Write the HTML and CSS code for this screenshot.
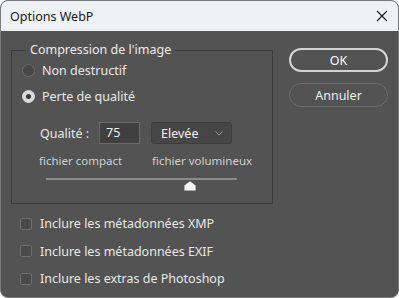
FILE: index.html
```html
<!DOCTYPE html>
<html lang="fr">
<head>
    <meta charset="UTF-8">
    <title>Options WebP</title>
    <link rel="stylesheet" href="styles.css">
</head>
<body>
<div class="window">
    <div class="titlebar">
        <span class="title">Options WebP</span>
        <svg class="close" width="12" height="12" viewBox="0 0 12 12">
            <path d="M1 1 L11 11 M11 1 L1 11" stroke="#1a1a1a" stroke-width="1.2" fill="none"/>
        </svg>
    </div>

    <div class="content">
        <div class="main">
            <!-- Compression -->
            <fieldset class="group">
                <legend>Compression de l'image</legend>
                <div class="radio-row first">
                    <span class="radio"></span>
                    <span>Non destructif</span>
                </div>
                <div class="radio-row">
                    <span class="radio checked"></span>
                    <span>Perte de qualité</span>
                </div>
                <div class="quality-row">
                    <span class="quality-label">Qualité :</span>
                    <div class="number-input">75</div>
                    <div class="select">
                        <span>Elevée</span>
                        <svg width="8" height="5" viewBox="0 0 8 5">
                            <path d="M0.5 0.5 L4 4 L7.5 0.5" stroke="#9a9a9a" stroke-width="1" fill="none"/>
                        </svg>
                    </div>
                </div>
                <div class="slider-labels">
                    <span class="label-left">fichier compact</span>
                    <span>fichier volumineux</span>
                </div>
                <div class="slider">
                    <div class="track"></div>
                    <svg class="thumb" width="12" height="10" viewBox="0 0 12 10">
                        <path d="M6 0.3 L11.6 4.6 L11.6 9.6 L0.4 9.6 L0.4 4.6 Z" fill="#f4f4f4"/>
                    </svg>
                </div>
            </fieldset>

            <!-- Metadaten -->
            <div class="checks">
                <div class="check-row"><span class="checkbox"></span>Inclure les métadonnées XMP</div>
                <div class="check-row"><span class="checkbox"></span>Inclure les métadonnées EXIF</div>
                <div class="check-row"><span class="checkbox"></span>Inclure les extras de Photoshop</div>
            </div>
        </div>

        <div class="buttons">
            <button class="button primary">OK</button>
            <button class="button">Annuler</button>
        </div>
    </div>
</div>
</body>
</html>
```

FILE: styles.css
```css
body {
    margin: 0;
    padding: 0;
    background-color: #ffffff;
    font-family: "Noto Sans", "Liberation Sans", sans-serif;
    font-size: 12px;
}

.window {
    width: 399px;
    height: 298px;
    box-sizing: border-box;
    border: 1px solid #7a7a7a;
    border-radius: 8px;
    overflow: hidden;
    display: flex;
    flex-direction: column;
    background-color: #535353;
}

.titlebar {
    height: 30px;
    flex: none;
    background-color: #eef2f7;
    display: flex;
    align-items: center;
    padding: 0 10px 0 9px;
}

.title {
    color: #1a1a1a;
    font-size: 12.5px;
    flex: 1;
}

.content {
    flex: 1;
    display: flex;
    padding: 10px 10px 0 10px;
    color: #e8e8e8;
}

.main {
    width: 262px;
}

/* Gruppe */
.group {
    margin: 0;
    padding: 0 0 0 10px;
    height: 163px;
    box-sizing: border-box;
    border: 1px solid #3b3b3b;
    border-radius: 1px;
}

.group legend {
    padding: 0 4px;
    margin-left: 4px;
    font-size: 12.5px;
    line-height: 18px;
    color: #ececec;
}

.radio-row {
    display: flex;
    align-items: center;
    gap: 7px;
    height: 26px;
    font-size: 12.5px;
}

.radio-row.first {
    margin-top: -1.5px;
}

.radio {
    width: 11px;
    height: 11px;
    border-radius: 50%;
    border: 1px solid #6a6a6a;
    background-color: #474747;
    display: inline-block;
}

.radio.checked {
    background-color: #dadada;
    border-color: #dadada;
    position: relative;
}

.radio.checked::after {
    content: "";
    position: absolute;
    left: 3px;
    top: 3px;
    width: 5px;
    height: 5px;
    border-radius: 50%;
    background-color: #3a3a3a;
}

.quality-row {
    display: flex;
    align-items: center;
    margin-top: 12px;
    margin-left: 18px;
    height: 23px;
}

.quality-label {
    width: 59px;
    font-size: 12.5px;
}

.number-input {
    width: 41px;
    height: 22px;
    box-sizing: border-box;
    border: 1px solid #6b6b6b;
    background-color: #404040;
    padding-left: 6px;
    line-height: 20px;
    font-size: 12.5px;
    color: #f0f0f0;
}

.select {
    margin-left: 11px;
    width: 81px;
    height: 22px;
    box-sizing: border-box;
    border: 1px solid #3d3d3d;
    border-radius: 3px;
    background-color: #464646;
    display: flex;
    align-items: center;
    justify-content: space-between;
    padding: 0 8px 0 9px;
    font-size: 12.5px;
    color: #f0f0f0;
}

.slider-labels {
    display: flex;
    margin-top: 7px;
    margin-left: 17px;
    height: 18px;
    line-height: 18px;
    color: #d0d0d0;
    font-size: 11.5px;
}

.label-left {
    width: 113px;
}

.slider {
    position: relative;
    margin: 8.5px 0 0 24px;
    width: 191px;
    height: 14px;
}

.track {
    height: 2px;
    background-color: #8b8b8b;
}

.thumb {
    position: absolute;
    left: 138px;
    top: 3px;
}

/* Checkboxen */
.checks {
    margin-top: 6px;
    padding-left: 9px;
}

.check-row {
    display: flex;
    align-items: center;
    gap: 8px;
    height: 27.5px;
    font-size: 12.5px;
    color: #e8e8e8;
}

.checkbox {
    width: 12px;
    height: 12px;
    box-sizing: border-box;
    border: 1px solid #6e6e6e;
    border-radius: 2px;
    background-color: #4a4a4a;
}

/* Buttons */
.buttons {
    margin-left: auto;
    display: flex;
    flex-direction: column;
    gap: 11px;
    padding-top: 7px;
}

.button {
    width: 99px;
    height: 24px;
    border-radius: 12px;
    border: 1.5px solid #6d6d6d;
    background-color: #535353;
    color: #ececec;
    font-family: "Noto Sans", "Liberation Sans", sans-serif;
    font-size: 12.5px;
    padding: 0;
}

.button.primary {
    border: 2px solid #d4d4d4;
    color: #ffffff;
}
```
